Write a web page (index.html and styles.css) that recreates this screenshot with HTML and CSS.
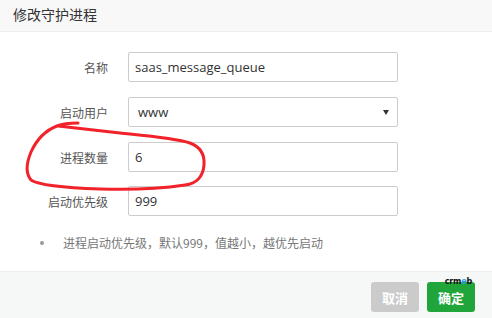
FILE: index.html
```html
<!DOCTYPE html>
<html>
<head>
<meta charset="utf-8">
<link rel="stylesheet" href="styles.css">
</head>
<body>
<div class="dialog">
  <div class="header">修改守护进程</div>
  <div class="body">
    <div class="row">
      <label class="label">名称</label>
      <div class="input">saas_message_queue</div>
    </div>
    <div class="row">
      <label class="label">启动用户</label>
      <div class="input select"><span>www</span><span class="arrow"></span></div>
    </div>
    <div class="row">
      <label class="label">进程数量</label>
      <div class="input">6</div>
    </div>
    <div class="row">
      <label class="label">启动优先级</label>
      <div class="input">999</div>
    </div>
    <ul class="notes">
      <li>进程启动优先级，默认999，值越小，越优先启动</li>
    </ul>
  </div>
  <div class="footer">
    <button class="btn cancel">取消</button>
    <button class="btn ok">确定<span class="mark">crm<i>e</i>b</span></button>
  </div>
  <svg class="circle" width="492" height="318" viewBox="0 0 492 318">
    <path d="M78 123 C70 123 62 124 57 126 C44 131 36 141 31 152 C26 164 26 174 31 180 C40 186 70 188 100 189 C130 190 165 188 185 185 C198 183 203 176 204 165 C205 152 198 146 190 143 C175 138 150 136 120 133 C95 130 75 128 58 126"
      fill="none" stroke="#f2222a" stroke-width="3" stroke-linecap="round" stroke-linejoin="round"/>
  </svg>
</div>
</body>
</html>
```
FILE: styles.css
```css
* { box-sizing: border-box; }
html, body { margin: 0; padding: 0; background: #fff; }
body {
  font-family: "Open Sans", "Noto Sans CJK SC", sans-serif;
  color: #333;
}
.dialog {
  position: relative;
  width: 492px;
  height: 318px;
  display: flex;
  flex-direction: column;
  overflow: hidden;
}
.header {
  height: 32px;
  background: #f8f8f8;
  border-bottom: 1px solid #eee;
  padding-left: 13px;
  font-family: "Noto Sans CJK SC", sans-serif;
  font-size: 14px;
  line-height: 29px;
  color: #333;
}
.body {
  flex: 1;
  padding-top: 20px;
}
.row {
  display: flex;
  align-items: center;
  height: 30px;
  margin-bottom: 15px;
}
.row:nth-child(3) { margin-bottom: 14px; }
.label {
  width: 108px;
  text-align: right;
  margin-right: 20px;
  font-family: "Noto Sans CJK SC", sans-serif;
  font-size: 12px;
  color: #555;
}
.input {
  width: 270px;
  height: 30px;
  border: 1px solid #ccc;
  border-radius: 2px;
  padding-left: 6px;
  font-size: 13px;
  line-height: 28px;
  color: #333;
}
.select {
  display: flex;
  justify-content: space-between;
  align-items: center;
  padding-left: 9px;
  padding-right: 6px;
}
.arrow {
  width: 0;
  height: 0;
  border-left: 3.5px solid transparent;
  border-right: 3.5px solid transparent;
  border-top: 5px solid #333;
  margin-right: 2px;
}
.notes {
  margin: 17px 0 0 0;
  padding: 0;
  list-style: none;
  font-family: "Noto Sans CJK SC", sans-serif;
  font-size: 12px;
  color: #777;
  line-height: 20px;
}
.notes li {
  display: flex;
  align-items: center;
  padding-left: 40px;
}
.notes li::before {
  content: "";
  width: 4px;
  height: 4px;
  border-radius: 50%;
  background: #999;
  margin-right: 19px;
}
.footer {
  height: 47px;
  background: #f6f8f8;
  border-top: 1px solid #eceeee;
  display: flex;
  justify-content: flex-end;
  align-items: flex-start;
  padding-top: 10px;
  padding-right: 17px;
  gap: 8px;
}
.btn {
  position: relative;
  width: 48px;
  height: 30px;
  border: none;
  border-radius: 3px;
  font-family: "Noto Sans CJK SC", sans-serif;
  font-weight: bold;
  font-size: 13px;
  color: #fff;
  padding: 0;
  line-height: 32px;
}
.cancel { background: #cbcbcb; }
.ok { background: #20a53a; }
.mark {
  position: absolute;
  right: 3px;
  top: -4px;
  font-family: "DejaVu Sans", sans-serif;
  font-size: 8px;
  font-weight: bold;
  line-height: 8px;
  color: #111;
  letter-spacing: -0.2px;
}
.mark i { font-style: normal; color: #2a9df4; }
.circle {
  position: absolute;
  left: 0;
  top: 0;
  pointer-events: none;
}
```
